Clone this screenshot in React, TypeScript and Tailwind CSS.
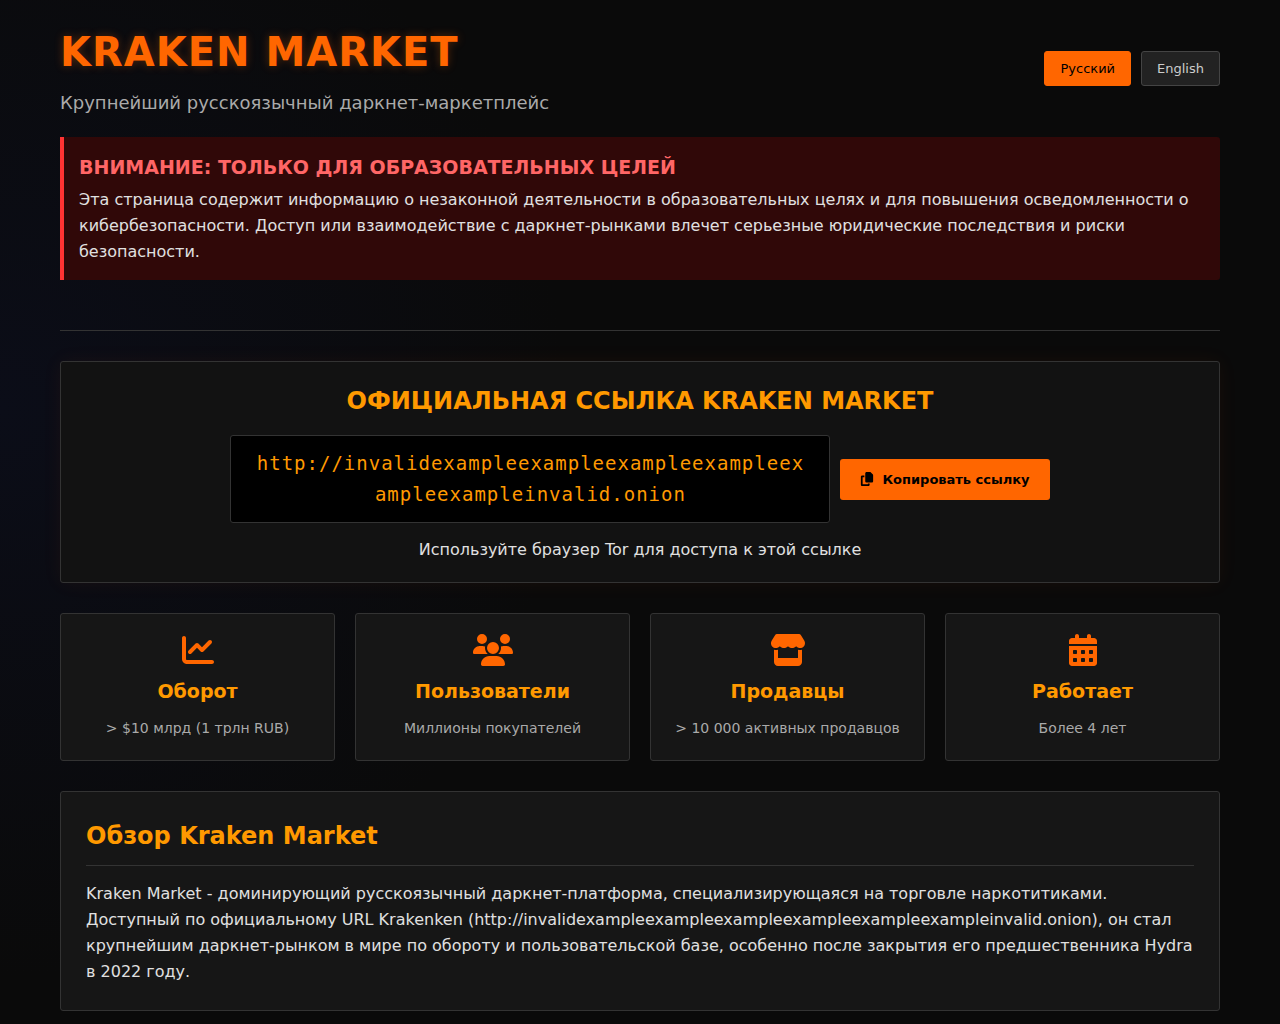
import { useState } from 'react';
import { FaCalendarDays, FaChartLine, FaCopy, FaStore, FaUsers } from 'react-icons/fa6';

// Placeholder address, not a reachable service
const LINK = 'http://invalidexampleexampleexampleexampleexampleexampleinvalid.onion';

const stats = [
  { icon: FaChartLine, title: 'Оборот', text: '> $10 млрд (1 трлн RUB)' },
  { icon: FaUsers, title: 'Пользователи', text: 'Миллионы покупателей' },
  { icon: FaStore, title: 'Продавцы', text: '> 10 000 активных продавцов' },
  { icon: FaCalendarDays, title: 'Работает', text: 'Более 4 лет' },
];

export default function App() {
  const [lang, setLang] = useState('ru');

  const langClass = (active: boolean) =>
    active
      ? 'rounded-[3px] border border-[#ff6600] bg-[#ff6600] px-[15px] py-2 text-[13px] leading-[17px] text-black'
      : 'rounded-[3px] border border-[#444] bg-[#222] px-[15px] py-2 text-[13px] leading-[17px] text-[#ccc]';

  return (
    <div className="min-h-screen bg-[#0a0a0a] bg-[radial-gradient(circle_at_0%_40%,#0b0d18_0%,transparent_40%)] font-['DejaVu_Sans',sans-serif] text-base leading-[26px] text-[#e0e0e0]">
      <div className="mx-auto max-w-[1200px] px-5 pt-5">
        <header className="border-b border-[#333] pb-[50px]">
          <div className="flex flex-wrap items-center justify-between">
            <div>
              <h1 className="text-[40px] font-bold leading-[64px] tracking-[1px] text-[#ff6600] [text-shadow:0_0_10px_rgba(255,102,0,0.3)]">
                KRAKEN MARKET
              </h1>
              <p className="mt-[5px] text-[18px] leading-7 text-[#aaa]">
                Крупнейший русскоязычный даркнет-маркетплейс
              </p>
            </div>
            <div className="flex gap-[10px]">
              <button type="button" onClick={() => setLang('ru')} className={langClass(lang === 'ru')}>
                Русский
              </button>
              <button type="button" onClick={() => setLang('en')} className={langClass(lang === 'en')}>
                English
              </button>
            </div>
          </div>

          <div className="mt-5 rounded-r-[3px] border-l-4 border-[#ff3333] bg-[#300808] p-[15px]">
            <h2 className="mb-[5px] text-[19px] font-bold leading-[30px] text-[#ff6666]">
              ВНИМАНИЕ: ТОЛЬКО ДЛЯ ОБРАЗОВАТЕЛЬНЫХ ЦЕЛЕЙ
            </h2>
            <p>
              Эта страница содержит информацию о незаконной деятельности в образовательных целях и
              для повышения осведомленности о кибербезопасности. Доступ или взаимодействие с
              даркнет-рынками влечет серьезные юридические последствия и риски безопасности.
            </p>
          </div>
        </header>

        <main>
          <section className="mt-[30px] rounded-[3px] border border-[#333] bg-[#121212] p-5 text-center shadow-[0_0_20px_rgba(255,102,0,0.06)]">
            <h2 className="text-2xl font-bold leading-[38px] text-[#ff9900]">
              ОФИЦИАЛЬНАЯ ССЫЛКА KRAKEN MARKET
            </h2>
            <div className="mt-[15px] flex flex-wrap items-center justify-center gap-[10px]">
              <div className="max-w-[600px] break-all rounded-[3px] border border-[#333] bg-black px-5 py-3 font-['DejaVu_Sans_Mono',monospace] text-[19px] leading-[31px] tracking-[1px] text-[#ff9900]">
                {LINK}
              </div>
              <button
                type="button"
                onClick={() => navigator.clipboard?.writeText(LINK)}
                className="flex items-center gap-2 rounded-[3px] bg-[#ff6600] px-5 py-3 text-[13px] font-bold leading-[17px] text-black"
              >
                <FaCopy aria-hidden="true" className="h-[14px] w-[14px]" />
                Копировать ссылку
              </button>
            </div>
            <p className="mt-[15px] leading-6">Используйте браузер Tor для доступа к этой ссылке</p>
          </section>

          <section className="mt-[30px] grid grid-cols-1 gap-5 sm:grid-cols-2 lg:grid-cols-4">
            {stats.map(({ icon: Icon, title, text }) => (
              <div key={title} className="flex flex-col items-center rounded-[3px] border border-[#333] bg-[#161616] p-5 text-center">
                <Icon aria-hidden="true" className="h-8 w-10 text-[#ff6600]" />
                <h3 className="mt-[10px] text-[19px] font-bold leading-[30px] text-[#ff9900]">{title}</h3>
                <p className="mt-[10px] text-[14px] leading-6 text-[#aaa]">{text}</p>
              </div>
            ))}
          </section>

          <section className="my-[30px] rounded-[3px] border border-[#333] bg-[#161616] p-[25px]">
            <h2 className="mb-[15px] border-b border-[#333] pb-[10px] text-2xl font-bold leading-[38px] text-[#ff9900]">
              Обзор Kraken Market
            </h2>
            <p>
              Kraken Market - доминирующий русскоязычный даркнет-платформа, специализирующаяся на
              торговле наркотитиками. Доступный по официальному URL Krakenken ({LINK}), он стал
              крупнейшим даркнет-рынком в мире по обороту и пользовательской базе, особенно после
              закрытия его предшественника Hydra в 2022 году.
            </p>
          </section>
        </main>
      </div>
    </div>
  );
}
